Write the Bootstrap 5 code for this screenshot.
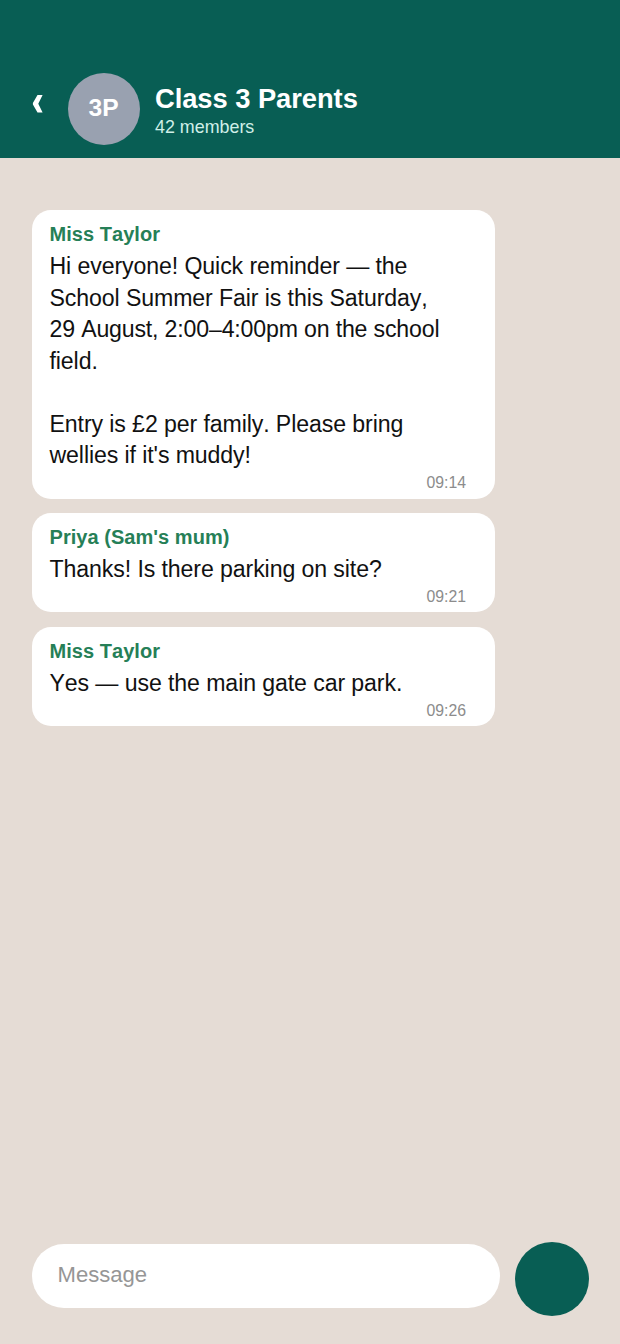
<!DOCTYPE html>
<html lang="en">
<head>
<meta charset="utf-8">
<meta name="viewport" content="width=device-width, initial-scale=1">
<title>Class 3 Parents</title>
<link href="https://cdn.jsdelivr.net/npm/bootstrap@5.3.0/dist/css/bootstrap.min.css" rel="stylesheet">
<style>
  body { font-family: "Liberation Sans", Arial, sans-serif; background: #e5dcd5; color: #111; }
  .chat-header { height: 158px; background: #085e54; padding: 73px 32px 0; }
  .back-btn { width: 11px; height: 18px; margin: 22px 25px 0 0; }
  .back-btn svg { width: 11px; height: 18px; flex: none; }
  .avatar { width: 72px; height: 72px; margin-right: 15px; padding: 0 1px 1px 0; background: #99a1b0; font-size: 24.6px; }
  .group-name { font-size: 27.35px; line-height: 32px; margin-top: 10px; letter-spacing: -.06px; }
  .group-members { font-size: 17.88px; line-height: 20px; margin-top: 2px; color: #d0efe8; }
  .messages { padding: 52px 0 0 31.5px; gap: 14.2px; }
  .bubble { width: 463.5px; border-radius: 19px; padding: 12px 18px 0; }
  .sender { font-size: 20px; line-height: 24px; letter-spacing: .04px; font-kerning: none; color: #267f57; }
  .message-text { font-size: 23.14px; line-height: 31.55px; margin-top: 5px; letter-spacing: -.1px; font-kerning: none; white-space: pre-line; }
  .tight { letter-spacing: -.17px; }
  .stamp { font-size: 15.8px; line-height: 18px; padding: 2.5px 11px 6.45px 0; color: #8c8c8c; }
  .composer { padding: 0 31px 28px 31.5px; gap: 15px; }
  .message-field { height: 64px; padding: 0 26px 4px; font-size: 22.1px; color: #969696; margin-bottom: 5px; }
  .send-btn { width: 74.5px; height: 74.5px; background: #085e54; }
</style>
</head>
<body>
<div class="d-flex flex-column vh-100 overflow-hidden">
  <header class="chat-header d-flex align-items-start text-white flex-shrink-0">
    <button class="back-btn btn p-0 border-0 d-flex" aria-label="Back">
      <svg viewBox="0 0 11 18"><path d="M5.5 0H10.6L6.3 8.8L10.6 17.6H5.5L.9 9.6V8Z" fill="#fff"/></svg>
    </button>
    <div class="avatar rounded-circle d-flex align-items-center justify-content-center fw-bold">3P</div>
    <div>
      <h1 class="group-name fw-bold mb-0">Class 3 Parents</h1>
      <div class="group-members">42 members</div>
    </div>
  </header>
  <main class="messages d-flex flex-column flex-grow-1">
    <article class="bubble bg-white">
      <div class="sender fw-bold">Miss Taylor</div>
      <div class="message-text">Hi everyone! Quick reminder — the
School Summer Fair is this Saturday,
<span class="tight">29 August, 2:00–4:00pm on the school</span>
field.

Entry is £2 per family. Please bring
wellies if it's muddy!</div>
      <div class="stamp text-end">09:14</div>
    </article>
    <article class="bubble bg-white">
      <div class="sender fw-bold">Priya (Sam's mum)</div>
      <div class="message-text">Thanks! Is there parking on site?</div>
      <div class="stamp text-end">09:21</div>
    </article>
    <article class="bubble bg-white">
      <div class="sender fw-bold">Miss Taylor</div>
      <div class="message-text">Yes — use the main gate car park.</div>
      <div class="stamp text-end">09:26</div>
    </article>
  </main>
  <footer class="composer d-flex align-items-center flex-shrink-0">
    <div class="message-field bg-white rounded-pill flex-grow-1 d-flex align-items-center">Message</div>
    <button class="send-btn btn rounded-circle border-0 p-0 flex-shrink-0" aria-label="Send"></button>
  </footer>
</div>
<script src="https://cdn.jsdelivr.net/npm/bootstrap@5.3.0/dist/js/bootstrap.bundle.min.js"></script>
</body>
</html>
